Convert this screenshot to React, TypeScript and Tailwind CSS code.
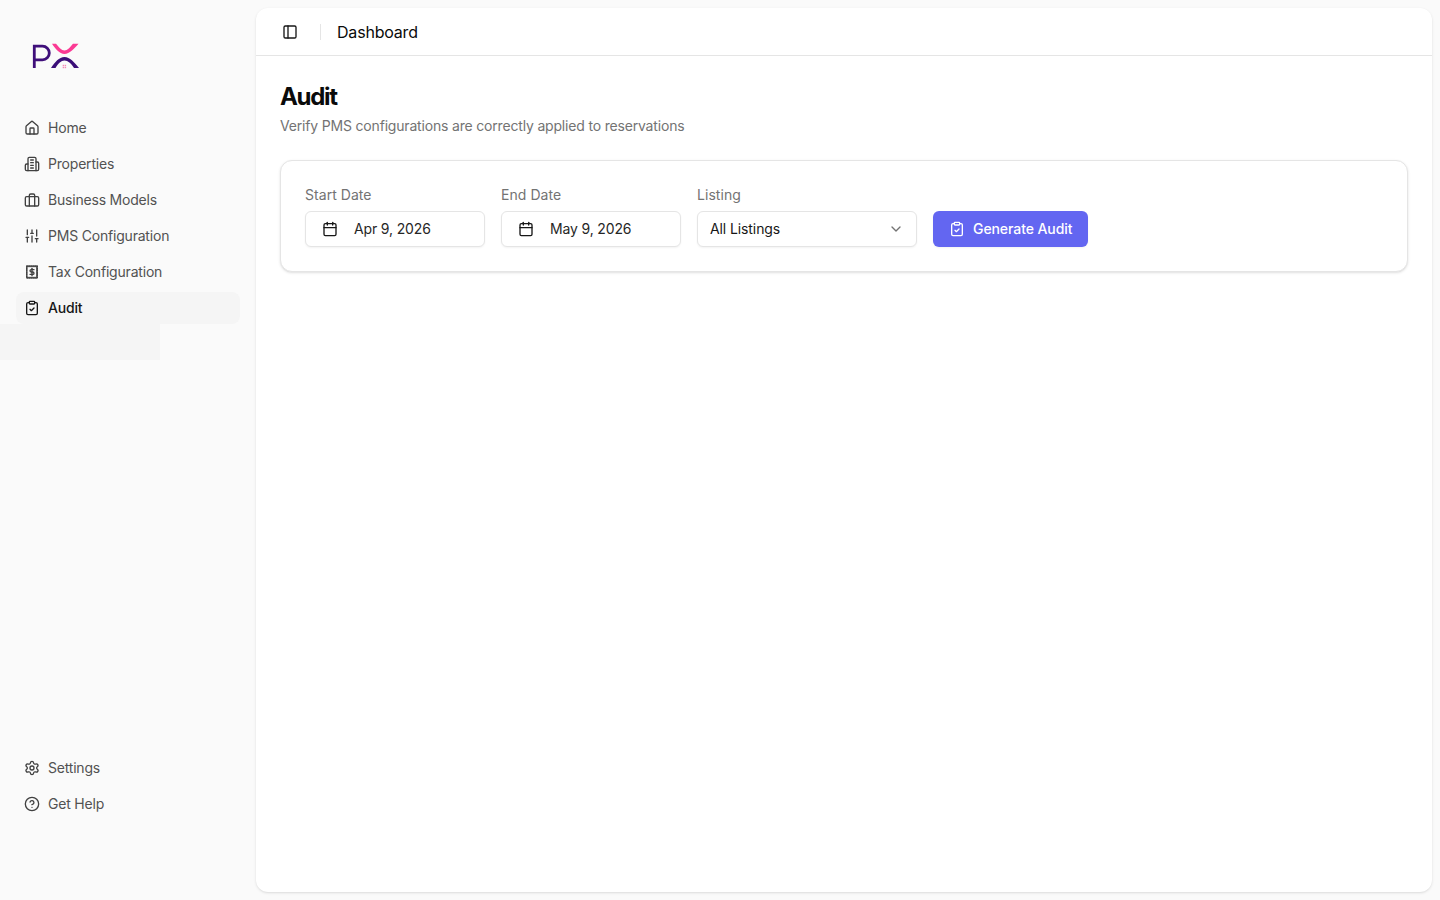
import React from "react";
import { House, SlidersVertical, ClipboardCheck, Settings, CircleHelp, PanelLeft, Calendar, ChevronDown } from "lucide-react";

const font = { fontFamily: "Inter, sans-serif" };

type IconProps = { size?: number; className?: string };

function svgProps(size = 16, className?: string) {
  return {
    width: size,
    height: size,
    viewBox: "0 0 24 24",
    fill: "none",
    stroke: "currentColor",
    strokeWidth: 2,
    strokeLinecap: "round" as const,
    strokeLinejoin: "round" as const,
    className,
  };
}

function PropertiesIcon({ size, className }: IconProps) {
  return (
    <svg {...svgProps(size, className)}>
      <path d="M6 22V4a2 2 0 0 1 2-2h8a2 2 0 0 1 2 2v18Z" />
      <path d="M6 12H4a2 2 0 0 0-2 2v6a2 2 0 0 0 2 2h2" />
      <path d="M18 9h2a2 2 0 0 1 2 2v9a2 2 0 0 1-2 2h-2" />
      <path d="M10 6h4" />
      <path d="M10 10h4" />
      <path d="M10 14h4" />
      <path d="M10 18h4" />
    </svg>
  );
}

function BusinessIcon({ size, className }: IconProps) {
  return (
    <svg {...svgProps(size, className)}>
      <rect x="2" y="7" width="20" height="14" rx="2" />
      <path d="M16 21V5a2 2 0 0 0-2-2h-4a2 2 0 0 0-2 2v16" />
    </svg>
  );
}

function TaxIcon({ size, className }: IconProps) {
  return (
    <svg {...svgProps(size, className)}>
      <path d="M4 3h16v18H4Z" strokeDasharray="1.6 1.6" />
      <path d="M5 4h14v16H5Z" strokeWidth="1.4" />
      <path d="M15 8.5h-4.2a1.7 1.7 0 0 0 0 3.5h2.4a1.7 1.7 0 0 1 0 3.5H9" />
      <path d="M12 6.5v11" />
    </svg>
  );
}

function Logo() {
  return (
    <svg width="48" height="26" viewBox="0 0 48 26" fill="none">
      <path d="M2.3 25 V3.2 H10.5 a6.8 6.8 0 0 1 0 13.6 H2.3" stroke="#3f0f7a" strokeWidth="2.8" />
      <path d="M20 0.8 L24 0.8 C27 4.5 29.5 7.5 32.5 7.5 C35.5 7.5 38 4.5 41 0.8 L46.5 0.8 C42 6 37.5 11 32.5 11 C27.5 11 23.5 6 20 0.8 Z" fill="#fb3a94" />
      <path d="M19 25 L23.5 25 C26.5 20.5 29 17.6 32.5 17.6 C36 17.6 39 20.5 42 25 L47 25 C42 19 38 14 32.5 14 C27 14 23 19 19 25 Z" fill="#3a0e78" />
      <rect x="30.7" y="21.8" width="1.4" height="1.4" fill="#f58ab8" />
      <rect x="32.7" y="21.8" width="1.4" height="1.4" fill="#f58ab8" />
      <rect x="30.7" y="23.8" width="1.4" height="1.4" fill="#f58ab8" />
      <rect x="32.7" y="23.8" width="1.4" height="1.4" fill="#f58ab8" />
    </svg>
  );
}

function NavItem({ icon: Icon, label, active }: { icon: React.ComponentType<IconProps>; label: string; active?: boolean }) {
  return (
    <a className={`flex h-8 items-center gap-2 rounded-lg px-2 text-sm tracking-[-0.2px] ${active ? "bg-[#f5f5f5] font-medium text-[#171717]" : "text-[#525252]"}`}>
      <Icon size={16} className={active ? "text-[#171717]" : "text-[#404040]"} />
      <span>{label}</span>
    </a>
  );
}

function DateField({ label, value }: { label: string; value: string }) {
  return (
    <div className="flex flex-col gap-2">
      <label className="text-sm leading-4 tracking-[0.05px] text-[#737373]">{label}</label>
      <div className="flex h-9 w-[180px] items-center rounded-md border border-[#e5e5e5] bg-white pl-[16px] text-sm tracking-[-0.15px] text-[#262626] shadow-xs">
        <Calendar size={16} className="text-[#171717]" />
        <span className="ml-4">{value}</span>
      </div>
    </div>
  );
}

export default function App() {
  return (
    <div className="flex h-[900px] w-[1440px] overflow-hidden bg-[#fafafa]" style={font}>
      <aside className="flex w-[256px] shrink-0 flex-col px-4 pb-[80px] pt-[43px]">
        <div className="ml-4 flex h-[29px] items-start">
          <Logo />
        </div>
        <nav className="mt-[40px] flex flex-col gap-1">
          <NavItem icon={House} label="Home" />
          <NavItem icon={PropertiesIcon} label="Properties" />
          <NavItem icon={BusinessIcon} label="Business Models" />
          <NavItem icon={SlidersVertical} label="PMS Configuration" />
          <NavItem icon={TaxIcon} label="Tax Configuration" />
          <NavItem icon={ClipboardCheck} label="Audit" active />
          <div className="-ml-4 -mt-1 h-9 w-40 bg-[#f5f5f5]" />
        </nav>
        <div className="mt-auto flex flex-col gap-1">
          <NavItem icon={Settings} label="Settings" />
          <NavItem icon={CircleHelp} label="Get Help" />
        </div>
      </aside>
      <main className="my-2 mr-2 flex-1 rounded-xl bg-white shadow-sm">
        <header className="flex h-12 items-center border-b border-[#e5e5e5] pl-[26px]">
          <PanelLeft size={16} className="text-[#171717]" />
          <div className="ml-[22px] h-4 w-px bg-[#e5e5e5]" />
          <h1 className="ml-4 text-base font-normal leading-6 tracking-[-0.2px] text-[#0a0a0a]">Dashboard</h1>
        </header>
        <section className="px-6 pt-[25px]">
          <h2 className="text-2xl font-bold leading-8 tracking-[-1.3px] text-[#0a0a0a]">Audit</h2>
          <p className="mt-[3px] text-sm leading-5 tracking-[-0.18px] text-[#737373]">Verify PMS configurations are correctly applied to reservations</p>
          <div className="mt-6 flex h-28 items-end gap-4 rounded-xl border border-[#e5e5e5] bg-white px-6 pb-6 shadow-sm">
            <DateField label="Start Date" value="Apr 9, 2026" />
            <DateField label="End Date" value="May 9, 2026" />
            <div className="flex flex-col gap-2">
              <label className="text-sm leading-4 tracking-[0.05px] text-[#737373]">Listing</label>
              <div className="flex h-9 w-[220px] items-center justify-between rounded-md border border-[#e5e5e5] bg-white px-3 text-sm tracking-[-0.1px] text-[#171717] shadow-xs">
                <span>All Listings</span>
                <ChevronDown size={16} className="text-[#737373]" />
              </div>
            </div>
            <button className="flex h-9 items-center gap-2 rounded-md bg-[#6366f1] px-4 text-sm font-medium tracking-[-0.08px] text-white shadow-xs">
              <ClipboardCheck size={16} />
              Generate Audit
            </button>
          </div>
        </section>
      </main>
    </div>
  );
}
